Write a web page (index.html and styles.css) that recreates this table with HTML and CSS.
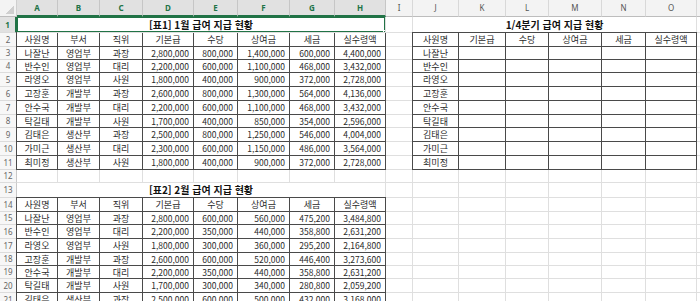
FILE: index.html
```html
<!DOCTYPE html>
<html lang="ko">
<head>
<meta charset="utf-8">
<title>급여 지급 현황</title>
<link rel="stylesheet" href="styles.css">
</head>
<body>
<div class="sheet">
  <div class="r hr">
    <div class="c corner"></div>
    <div class="c hd hs">A</div><div class="c hd hs">B</div><div class="c hd hs">C</div><div class="c hd hs">D</div><div class="c hd hs">E</div><div class="c hd hs">F</div><div class="c hd hs">G</div><div class="c hd hs">H</div>
    <div class="c hd">I</div><div class="c hd">J</div><div class="c hd">K</div><div class="c hd">L</div><div class="c hd">M</div><div class="c hd">N</div><div class="c hd">O</div><div class="c hd"></div>
  </div>

  <div class="r h16">
    <div class="c rh rs">1</div>
    <div class="c ttl m8 sel">[표1] 1월 급여 지급 현황</div>
    <div class="c"></div>
    <div class="c ttl m6">1/4분기 급여 지급 현황</div>
    <div class="c"></div>
  </div>

  <div class="r">
    <div class="c rh">2</div>
    <div class="c t tt tl">사원명</div><div class="c t tt">부서</div><div class="c t tt">직위</div><div class="c t tt">기본급</div><div class="c t tt">수당</div><div class="c t tt">상여금</div><div class="c t tt">세금</div><div class="c t tt">실수령액</div>
    <div class="c"></div>
    <div class="c t tt tl">사원명</div><div class="c t tt">기본급</div><div class="c t tt">수당</div><div class="c t tt">상여금</div><div class="c t tt">세금</div><div class="c t tt">실수령액</div>
    <div class="c"></div>
  </div>

  <div class="r h13">
    <div class="c rh">3</div>
    <div class="c t tl">나잘난</div><div class="c t">영업부</div><div class="c t">과장</div><div class="c t n">2,800,000</div><div class="c t n">800,000</div><div class="c t n">1,400,000</div><div class="c t n">600,000</div><div class="c t n">4,400,000</div>
    <div class="c"></div>
    <div class="c t tl">나잘난</div><div class="c t"></div><div class="c t"></div><div class="c t"></div><div class="c t"></div><div class="c t"></div>
    <div class="c"></div>
  </div>

  <div class="r h13">
    <div class="c rh">4</div>
    <div class="c t tl">반수인</div><div class="c t">영업부</div><div class="c t">대리</div><div class="c t n">2,200,000</div><div class="c t n">600,000</div><div class="c t n">1,100,000</div><div class="c t n">468,000</div><div class="c t n">3,432,000</div>
    <div class="c"></div>
    <div class="c t tl">반수인</div><div class="c t"></div><div class="c t"></div><div class="c t"></div><div class="c t"></div><div class="c t"></div>
    <div class="c"></div>
  </div>

  <div class="r">
    <div class="c rh">5</div>
    <div class="c t tl">라영오</div><div class="c t">영업부</div><div class="c t">사원</div><div class="c t n">1,800,000</div><div class="c t n">400,000</div><div class="c t n">900,000</div><div class="c t n">372,000</div><div class="c t n">2,728,000</div>
    <div class="c"></div>
    <div class="c t tl">라영오</div><div class="c t"></div><div class="c t"></div><div class="c t"></div><div class="c t"></div><div class="c t"></div>
    <div class="c"></div>
  </div>

  <div class="r">
    <div class="c rh">6</div>
    <div class="c t tl">고장훈</div><div class="c t">개발부</div><div class="c t">과장</div><div class="c t n">2,600,000</div><div class="c t n">800,000</div><div class="c t n">1,300,000</div><div class="c t n">564,000</div><div class="c t n">4,136,000</div>
    <div class="c"></div>
    <div class="c t tl">고장훈</div><div class="c t"></div><div class="c t"></div><div class="c t"></div><div class="c t"></div><div class="c t"></div>
    <div class="c"></div>
  </div>

  <div class="r">
    <div class="c rh">7</div>
    <div class="c t tl">안수국</div><div class="c t">개발부</div><div class="c t">대리</div><div class="c t n">2,200,000</div><div class="c t n">600,000</div><div class="c t n">1,100,000</div><div class="c t n">468,000</div><div class="c t n">3,432,000</div>
    <div class="c"></div>
    <div class="c t tl">안수국</div><div class="c t"></div><div class="c t"></div><div class="c t"></div><div class="c t"></div><div class="c t"></div>
    <div class="c"></div>
  </div>

  <div class="r h13">
    <div class="c rh">8</div>
    <div class="c t tl">탁길태</div><div class="c t">개발부</div><div class="c t">사원</div><div class="c t n">1,700,000</div><div class="c t n">400,000</div><div class="c t n">850,000</div><div class="c t n">354,000</div><div class="c t n">2,596,000</div>
    <div class="c"></div>
    <div class="c t tl">탁길태</div><div class="c t"></div><div class="c t"></div><div class="c t"></div><div class="c t"></div><div class="c t"></div>
    <div class="c"></div>
  </div>

  <div class="r">
    <div class="c rh">9</div>
    <div class="c t tl">김태은</div><div class="c t">생산부</div><div class="c t">과장</div><div class="c t n">2,500,000</div><div class="c t n">800,000</div><div class="c t n">1,250,000</div><div class="c t n">546,000</div><div class="c t n">4,004,000</div>
    <div class="c"></div>
    <div class="c t tl">김태은</div><div class="c t"></div><div class="c t"></div><div class="c t"></div><div class="c t"></div><div class="c t"></div>
    <div class="c"></div>
  </div>

  <div class="r">
    <div class="c rh">10</div>
    <div class="c t tl">가미근</div><div class="c t">생산부</div><div class="c t">대리</div><div class="c t n">2,300,000</div><div class="c t n">600,000</div><div class="c t n">1,150,000</div><div class="c t n">486,000</div><div class="c t n">3,564,000</div>
    <div class="c"></div>
    <div class="c t tl">가미근</div><div class="c t"></div><div class="c t"></div><div class="c t"></div><div class="c t"></div><div class="c t"></div>
    <div class="c"></div>
  </div>

  <div class="r">
    <div class="c rh">11</div>
    <div class="c t tl">최미정</div><div class="c t">생산부</div><div class="c t">사원</div><div class="c t n">1,800,000</div><div class="c t n">400,000</div><div class="c t n">900,000</div><div class="c t n">372,000</div><div class="c t n">2,728,000</div>
    <div class="c"></div>
    <div class="c t tl">최미정</div><div class="c t"></div><div class="c t"></div><div class="c t"></div><div class="c t"></div><div class="c t"></div>
    <div class="c"></div>
  </div>

  <div class="r h13">
    <div class="c rh">12</div>
    <div class="c"></div><div class="c"></div><div class="c"></div><div class="c"></div><div class="c"></div><div class="c"></div><div class="c"></div><div class="c"></div>
    <div class="c"></div><div class="c"></div><div class="c"></div><div class="c"></div><div class="c"></div><div class="c"></div><div class="c"></div><div class="c"></div>
  </div>

  <div class="r h15">
    <div class="c rh">13</div>
    <div class="c ttl m8">[표2] 2월 급여 지급 현황</div>
    <div class="c"></div><div class="c"></div><div class="c"></div><div class="c"></div><div class="c"></div><div class="c"></div><div class="c"></div><div class="c"></div>
  </div>

  <div class="r">
    <div class="c rh">14</div>
    <div class="c t tt tl">사원명</div><div class="c t tt">부서</div><div class="c t tt">직위</div><div class="c t tt">기본급</div><div class="c t tt">수당</div><div class="c t tt">상여금</div><div class="c t tt">세금</div><div class="c t tt">실수령액</div>
    <div class="c"></div><div class="c"></div><div class="c"></div><div class="c"></div><div class="c"></div><div class="c"></div><div class="c"></div><div class="c"></div>
  </div>

  <div class="r h13">
    <div class="c rh">15</div>
    <div class="c t tl">나잘난</div><div class="c t">영업부</div><div class="c t">과장</div><div class="c t n">2,800,000</div><div class="c t n">600,000</div><div class="c t n">560,000</div><div class="c t n">475,200</div><div class="c t n">3,484,800</div>
    <div class="c"></div><div class="c"></div><div class="c"></div><div class="c"></div><div class="c"></div><div class="c"></div><div class="c"></div><div class="c"></div>
  </div>

  <div class="r">
    <div class="c rh">16</div>
    <div class="c t tl">반수인</div><div class="c t">영업부</div><div class="c t">대리</div><div class="c t n">2,200,000</div><div class="c t n">350,000</div><div class="c t n">440,000</div><div class="c t n">358,800</div><div class="c t n">2,631,200</div>
    <div class="c"></div><div class="c"></div><div class="c"></div><div class="c"></div><div class="c"></div><div class="c"></div><div class="c"></div><div class="c"></div>
  </div>

  <div class="r">
    <div class="c rh">17</div>
    <div class="c t tl">라영오</div><div class="c t">영업부</div><div class="c t">사원</div><div class="c t n">1,800,000</div><div class="c t n">300,000</div><div class="c t n">360,000</div><div class="c t n">295,200</div><div class="c t n">2,164,800</div>
    <div class="c"></div><div class="c"></div><div class="c"></div><div class="c"></div><div class="c"></div><div class="c"></div><div class="c"></div><div class="c"></div>
  </div>

  <div class="r h13">
    <div class="c rh">18</div>
    <div class="c t tl">고장훈</div><div class="c t">개발부</div><div class="c t">과장</div><div class="c t n">2,600,000</div><div class="c t n">600,000</div><div class="c t n">520,000</div><div class="c t n">446,400</div><div class="c t n">3,273,600</div>
    <div class="c"></div><div class="c"></div><div class="c"></div><div class="c"></div><div class="c"></div><div class="c"></div><div class="c"></div><div class="c"></div>
  </div>

  <div class="r h13">
    <div class="c rh">19</div>
    <div class="c t tl">안수국</div><div class="c t">개발부</div><div class="c t">대리</div><div class="c t n">2,200,000</div><div class="c t n">350,000</div><div class="c t n">440,000</div><div class="c t n">358,800</div><div class="c t n">2,631,200</div>
    <div class="c"></div><div class="c"></div><div class="c"></div><div class="c"></div><div class="c"></div><div class="c"></div><div class="c"></div><div class="c"></div>
  </div>

  <div class="r">
    <div class="c rh">20</div>
    <div class="c t tl">탁길태</div><div class="c t">개발부</div><div class="c t">사원</div><div class="c t n">1,700,000</div><div class="c t n">300,000</div><div class="c t n">340,000</div><div class="c t n">280,800</div><div class="c t n">2,059,200</div>
    <div class="c"></div><div class="c"></div><div class="c"></div><div class="c"></div><div class="c"></div><div class="c"></div><div class="c"></div><div class="c"></div>
  </div>

  <div class="r">
    <div class="c rh">21</div>
    <div class="c t tl">김태은</div><div class="c t">생산부</div><div class="c t">과장</div><div class="c t n">2,500,000</div><div class="c t n">600,000</div><div class="c t n">500,000</div><div class="c t n">432,000</div><div class="c t n">3,168,000</div>
    <div class="c"></div><div class="c"></div><div class="c"></div><div class="c"></div><div class="c"></div><div class="c"></div><div class="c"></div><div class="c"></div>
  </div>
</div>
</body>
</html>
```

FILE: styles.css
```css
html, body {
  margin: 0;
  padding: 0;
  background: #ffffff;
  overflow: hidden;
}

body {
  font-family: "Noto Sans CJK KR", "Noto Sans", sans-serif;
  font-size: 9px;
  color: #2a2a2a;
}

.sheet {
  width: 760px;
}

.r {
  display: grid;
  grid-template-columns: 17px 41px 42px 43px 51px 44px 52px 45px 51px 27px 46px 47px 43px 53px 44px 51px 60px;
  height: 14px;
}

.h13 { height: 13px; }
.h15 { height: 15px; }
.h16 { height: 16px; }
.hr { height: 17px; }

.c {
  box-sizing: border-box;
  border-right: 1px solid #dfdfdf;
  border-bottom: 1px solid #dfdfdf;
  display: flex;
  align-items: center;
  justify-content: center;
  overflow: hidden;
  white-space: nowrap;
  line-height: 1;
  min-width: 0;
}

/* headers */
.corner {
  background: #f3f3f3 linear-gradient(to bottom right, transparent 50%, #cfcfcf 50%) no-repeat right 2px bottom 2px / 9px 9px;
  border-right: 1px solid #cfcfcf;
  border-bottom: 1px solid #bdbdbd;
}

.hd {
  background: #f3f3f3;
  color: #555555;
  font-size: 8px;
  font-family: "Noto Sans", "Liberation Sans", sans-serif;
  border-right: 1px solid #d8d8d8;
  border-bottom: 1px solid #bdbdbd;
}

.hs {
  background: #e1e1e1;
  color: #217346;
  font-weight: bold;
  border-right-color: #c6c6c6;
  border-bottom: 2px solid #217346;
}

.rh {
  background: #f7f7f7;
  color: #666666;
  font-size: 8px;
  font-family: "Noto Sans", "Liberation Sans", sans-serif;
  border-right: 1px solid #c9c9c9;
  border-bottom: 1px solid #dcdcdc;
}

.rs {
  background: #e1e1e1;
  color: #217346;
  font-weight: bold;
  border-right: 2px solid #217346;
}

/* merged titles */
.m8 { grid-column: span 8; }
.m6 { grid-column: span 6; }

.ttl {
  font-weight: bold;
  font-size: 10px;
  color: #111111;
}

.sel {
  position: relative;
}

.sel::after {
  content: "";
  position: absolute;
  left: -1px;
  top: -1px;
  right: -1px;
  bottom: -1px;
  border: 2px solid #217346;
  z-index: 2;
  pointer-events: none;
}

.sel::before {
  content: "";
  position: absolute;
  right: -4px;
  bottom: -4px;
  width: 4px;
  height: 4px;
  background: #217346;
  border: 1px solid #ffffff;
  z-index: 3;
}

/* bordered table cells */
.t {
  border-right: 1px solid #4a4a4a;
  border-bottom: 1px solid #4a4a4a;
}

.tl { box-shadow: -1px 0 0 #4a4a4a; }
.tt { box-shadow: 0 -1px 0 #4a4a4a; }
.tl.tt { box-shadow: -1px 0 0 #4a4a4a, 0 -1px 0 #4a4a4a, -1px -1px 0 #4a4a4a; }

.n {
  justify-content: flex-end;
  padding-right: 4px;
  font-size: 8.5px;
}
```
